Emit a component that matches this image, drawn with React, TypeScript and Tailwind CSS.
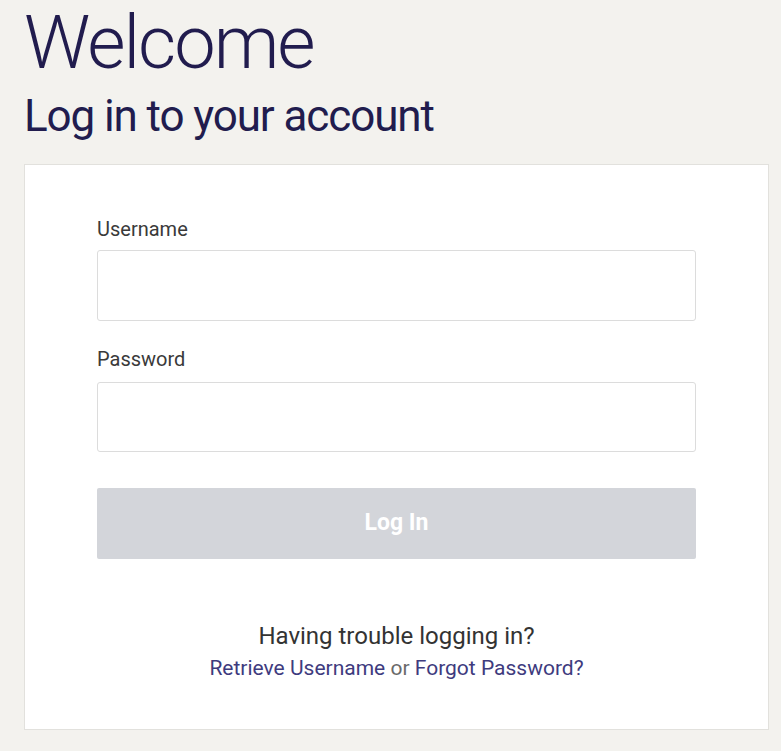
import React from 'react';

const App: React.FC = () => {
  return (
    <div className="min-h-[751px] w-[781px] bg-[#f3f2ee] font-['Roboto',sans-serif] pb-[19px]">
      <h1 className="pt-[1px] pl-[24px] text-[74px] leading-[84px] font-light tracking-[-2px] text-[#211c4e]">
        Welcome
      </h1>
      <h2 className="mt-[9px] pl-[24px] text-[44px] leading-[44px] font-normal tracking-[-1.1px] text-[#211c4e]">
        Log in to your account
      </h2>
      <div className="ml-[24px] mt-[26px] w-[745px] border border-[#e2e1dd] bg-white pt-[52px] pb-[48px] px-[72px]">
        <label className="block text-[20px] leading-[24px] text-[#3a3a3a]">Username</label>
        <input
          type="text"
          className="mt-[9px] block h-[71px] w-full rounded-[3px] border border-[#dcdcdc] bg-white px-3 text-lg outline-none"
        />
        <label className="mt-[26px] block text-[20px] leading-[24px] text-[#3a3a3a]">Password</label>
        <input
          type="password"
          className="mt-[11px] block h-[70px] w-full rounded-[3px] border border-[#dcdcdc] bg-white px-3 text-lg outline-none"
        />
        <button
          type="button"
          disabled
          className="mt-[36px] block h-[71px] w-full rounded-[2px] bg-[#d3d5da] text-[23px] font-bold text-white"
        >
          Log In
        </button>
        <div className="mt-[63px] text-center">
          <p className="text-[24px] leading-[28px] text-[#333333]">Having trouble logging in?</p>
          <p className="mt-[6px] text-[21px] leading-[25px] text-[#6a6a6a]">
            <a href="#" className="text-[#3e3b7e]">Retrieve Username</a> or{' '}
            <a href="#" className="text-[#3e3b7e]">Forgot Password?</a>
          </p>
        </div>
      </div>
    </div>
  );
};

export default App;
